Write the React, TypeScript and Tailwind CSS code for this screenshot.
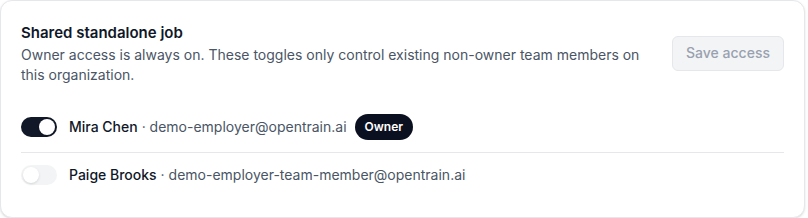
import { useState } from 'react'

const members = [
  { name: 'Mira Chen', email: 'demo-employer@opentrain.ai', owner: true, on: true },
  { name: 'Paige Brooks', email: 'demo-employer-team-member@opentrain.ai', owner: false, on: false },
]

function Toggle({ on }: { on: boolean }) {
  return (
    <span
      className={
        on
          ? 'flex h-5 w-9 shrink-0 items-center rounded-full bg-[#111827] p-0.5 justify-end'
          : 'flex h-5 w-9 shrink-0 items-center rounded-full bg-gray-100 p-0.5 justify-start'
      }
    >
      <span className="h-4 w-4 rounded-full bg-white shadow-sm" />
    </span>
  )
}

export default function App() {
  const [rows] = useState(members)

  return (
    <div className="min-h-screen bg-white font-['Inter','Liberation_Sans',sans-serif]">
      <div className="w-[805px] rounded-xl border border-gray-200 bg-white px-5 pt-5 pb-5 shadow-sm">
        <div className="flex items-center justify-between gap-6">
          <div>
            <h2 className="text-[15px] font-semibold leading-6 text-gray-900">Shared standalone job</h2>
            <p className="max-w-[630px] text-sm leading-5 text-gray-600">
              Owner access is always on. These toggles only control existing non-owner team members on
              this organization.
            </p>
          </div>
          <button
            disabled
            className="h-[35px] w-[112px] shrink-0 rounded-md border border-gray-200 bg-gray-100 text-sm font-medium text-gray-400"
          >
            Save access
          </button>
        </div>

        <div className="mt-[17px] divide-y divide-gray-200">
          {rows.map((m) => (
            <div key={m.email} className="flex items-center gap-3 py-3">
              <Toggle on={m.on} />
              <div className="flex items-center gap-2 text-sm">
                <span>
                  <span className="font-medium text-gray-900">{m.name}</span>
                  <span className="text-gray-600"> · {m.email}</span>
                </span>
                {m.owner && (
                  <span className="flex h-[26px] items-center rounded-full bg-[#0b1020] px-2.5 text-xs font-semibold text-white">
                    Owner
                  </span>
                )}
              </div>
            </div>
          ))}
        </div>
      </div>
    </div>
  )
}
